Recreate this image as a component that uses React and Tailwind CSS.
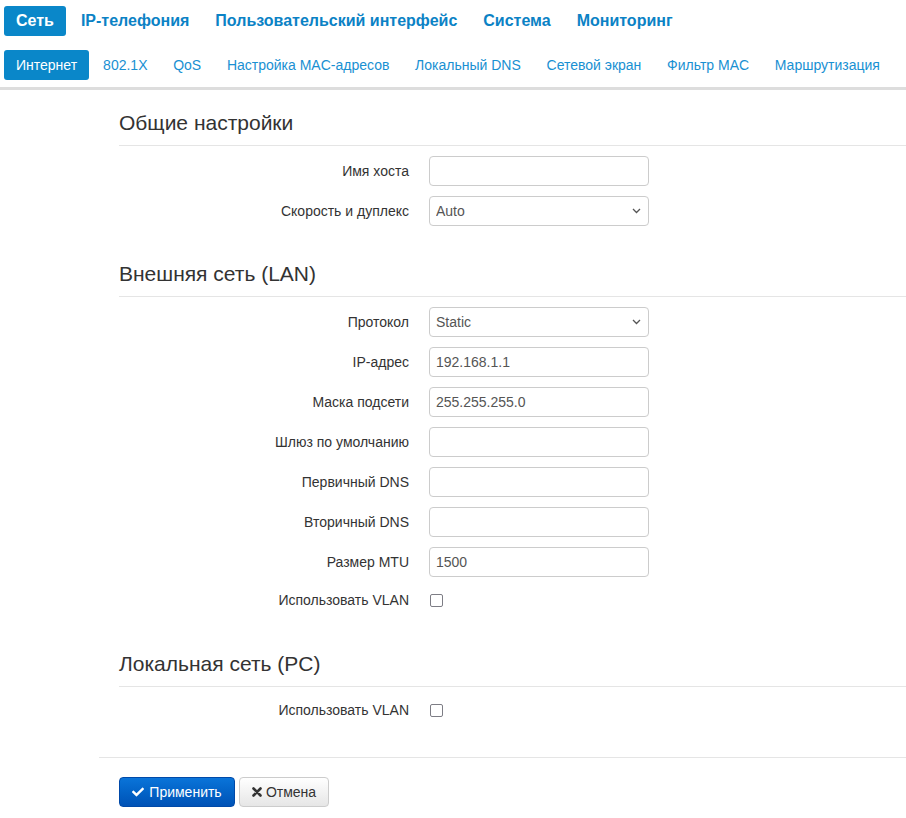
import { FaCheck } from "react-icons/fa";

const topNav = ["Сеть", "IP-телефония", "Пользовательский интерфейс", "Система", "Мониторинг"];
const subNav = [
    "Интернет",
    "802.1X",
    "QoS",
    "Настройка MAC-адресов",
    "Локальный DNS",
    "Сетевой экран",
    "Фильтр MAC",
    "Маршрутизация",
];

function Heading({ children, className = "" }) {
    return (
        <div className={className}>
            <h3 className="text-[21px] leading-[22px] text-[#333] font-normal">{children}</h3>
            <div className="mt-[11px] border-t border-[#e5e5e5]" />
        </div>
    );
}

function Row({ label, children, tall = true }) {
    return (
        <div className={`flex items-center mt-[10px] ${tall ? "h-[30px]" : "h-[26px]"}`}>
            <label className="w-[290px] text-right text-[14px] text-[#333]">{label}</label>
            <div className="ml-[20px] flex items-center">{children}</div>
        </div>
    );
}

function TextInput({ value = "" }) {
    return (
        <input
            type="text"
            defaultValue={value}
            className="w-[220px] h-[30px] border border-[#ccc] rounded-[4px] px-[6px] text-[14px] text-[#555] bg-white outline-none"
        />
    );
}

function Select({ value }) {
    return (
        <div className="relative w-[220px]">
            <select
                defaultValue={value}
                className="appearance-none w-[220px] h-[30px] border border-[#ccc] rounded-[4px] px-[6px] text-[14px] text-[#555] bg-white outline-none"
            >
                <option>{value}</option>
            </select>
            <svg
                className="absolute right-[8px] top-[12px] pointer-events-none"
                width="9"
                height="6"
                viewBox="0 0 9 6"
                fill="none"
            >
                <path d="M1 1l3.5 3.5L8 1" stroke="#555" strokeWidth="1.3" />
            </svg>
        </div>
    );
}

function Checkbox() {
    return <span className="block w-[13px] h-[13px] ml-[1px] border-[1.5px] border-[#7d7d85] rounded-[2px] bg-white" />;
}

export default function App() {
    return (
        <div className="bg-white min-h-[818px] font-['Liberation_Sans',Arial,sans-serif]">
            <nav className="flex pt-[6px] pl-[4px]">
                {topNav.map((item, i) => (
                    <a
                        key={item}
                        className={`h-[30px] flex items-center text-[16px] font-bold rounded-[3px] ${
                            i === 0 ? "bg-[#0a87c9] text-white px-[12px] mr-[2px]" : "text-[#0b82c5] px-[13px]"
                        }`}
                    >
                        {item}
                    </a>
                ))}
            </nav>
            <nav className="flex mt-[14px] pl-[4px]">
                {subNav.map((item, i) => (
                    <a
                        key={item}
                        className={`h-[30px] flex items-center text-[14px] rounded-[3px] ${
                            i === 0 ? "bg-[#0a87c9] text-white px-[12px] mr-[1px]" : "text-[#1990d2] px-[13px] -mr-[0.3px]"
                        }`}
                    >
                        {item}
                    </a>
                ))}
            </nav>
            <div className="mt-[7px] h-[3px] bg-[#dddddd]" />

            <div className="ml-[99px]">
                <div className="pl-[20px]">
                    <Heading className="mt-[22px]">Общие настройки</Heading>
                    <Row label="Имя хоста">
                        <TextInput />
                    </Row>
                    <Row label="Скорость и дуплекс">
                        <Select value="Auto" />
                    </Row>

                    <Heading className="mt-[37px]">Внешняя сеть (LAN)</Heading>
                    <Row label="Протокол">
                        <Select value="Static" />
                    </Row>
                    <Row label="IP-адрес">
                        <TextInput value="192.168.1.1" />
                    </Row>
                    <Row label="Маска подсети">
                        <TextInput value="255.255.255.0" />
                    </Row>
                    <Row label="Шлюз по умолчанию">
                        <TextInput />
                    </Row>
                    <Row label="Первичный DNS">
                        <TextInput />
                    </Row>
                    <Row label="Вторичный DNS">
                        <TextInput />
                    </Row>
                    <Row label="Размер MTU">
                        <TextInput value="1500" />
                    </Row>
                    <Row label="Использовать VLAN" tall={false}>
                        <Checkbox />
                    </Row>

                    <Heading className="mt-[40px]">Локальная сеть (PC)</Heading>
                    <Row label="Использовать VLAN" tall={false}>
                        <Checkbox />
                    </Row>
                </div>

                <div className="mt-[34px] border-t border-[#e5e5e5]" />

                <div className="pl-[20px] mt-[19px] flex gap-[4px]">
                    <button className="h-[30px] w-[116px] flex items-center justify-center gap-[5px] rounded-[4px] border border-[#0049a8] bg-gradient-to-b from-[#0a74d9] to-[#0052b6] text-white text-[14px]">
                        <FaCheck size={12} />
                        Применить
                    </button>
                    <button className="h-[30px] w-[90px] flex items-center justify-center gap-[4px] rounded-[4px] border border-[#ccc] bg-gradient-to-b from-white to-[#e6e6e6] text-[#333] text-[14px]">
                        <svg width="10" height="10" viewBox="0 0 10 10">
                            <path d="M1.5 1.5l7 7M8.5 1.5l-7 7" stroke="#333" strokeWidth="2.6" strokeLinecap="round" />
                        </svg>
                        Отмена
                    </button>
                </div>
            </div>
        </div>
    );
}
